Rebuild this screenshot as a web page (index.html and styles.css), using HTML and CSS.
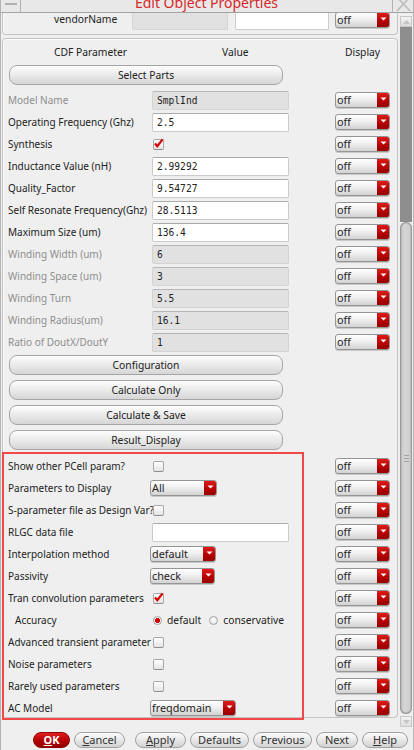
FILE: index.html
```html
<!DOCTYPE html>
<html>
<head>
<meta charset="utf-8">
<link rel="stylesheet" href="styles.css">
</head>
<body>
<div class="window">
  <div class="titlebar">
    <div class="tb-min"><span class="min-line"></span></div>
    <div class="tb-title">Edit Object Properties</div>
    <div class="tb-close"><svg width="21" height="13" viewBox="0 0 21 13"><path d="M4 -3 L17 11 M17 -3 L4 11" stroke="#bdbdbd" stroke-width="1.6" fill="none"/></svg></div>
  </div>
  <div class="body">
    <div class="scrollarea">
      <div class="vendor">
        <div class="vendor-row">
          <span class="vendor-label">vendorName</span>
          <span class="field dis vfield1"></span>
          <span class="field vfield2"></span>
          <div class="dd"><span class="dd-text">off</span><span class="dd-btn"><svg width="7" height="4" viewBox="0 0 7 4"><path d="M0.5 0.5 H6.5 L3.5 3.5 Z" fill="#fff"/></svg></span></div>
        </div>
      </div>
      <div class="main">
        <div class="grid header">
          <span class="h1">CDF Parameter</span>
          <span class="h2">Value</span>
          <span class="h3">Display</span>
        </div>
        <div class="wbtn">Select Parts</div>
        <div class="grid rows">
          <span class="lbl dim">Model Name</span><span class="field dis">SmplInd</span><div class="dd"><span class="dd-text">off</span><span class="dd-btn"><svg width="7" height="4" viewBox="0 0 7 4"><path d="M0.5 0.5 H6.5 L3.5 3.5 Z" fill="#fff"/></svg></span></div>
          <span class="lbl">Operating Frequency (Ghz)</span><span class="field">2.5</span><div class="dd"><span class="dd-text">off</span><span class="dd-btn"><svg width="7" height="4" viewBox="0 0 7 4"><path d="M0.5 0.5 H6.5 L3.5 3.5 Z" fill="#fff"/></svg></span></div>
          <span class="lbl">Synthesis</span><span class="cell"><span class="cb on"><svg width="11" height="11" viewBox="0 0 11 11"><path d="M2 5.5 L4.3 8.2 L9.6 1.4" stroke="#d40000" stroke-width="2.2" fill="none"/></svg></span></span><div class="dd"><span class="dd-text">off</span><span class="dd-btn"><svg width="7" height="4" viewBox="0 0 7 4"><path d="M0.5 0.5 H6.5 L3.5 3.5 Z" fill="#fff"/></svg></span></div>
          <span class="lbl">Inductance Value (nH)</span><span class="field">2.99292</span><div class="dd"><span class="dd-text">off</span><span class="dd-btn"><svg width="7" height="4" viewBox="0 0 7 4"><path d="M0.5 0.5 H6.5 L3.5 3.5 Z" fill="#fff"/></svg></span></div>
          <span class="lbl">Quality_Factor</span><span class="field">9.54727</span><div class="dd"><span class="dd-text">off</span><span class="dd-btn"><svg width="7" height="4" viewBox="0 0 7 4"><path d="M0.5 0.5 H6.5 L3.5 3.5 Z" fill="#fff"/></svg></span></div>
          <span class="lbl">Self Resonate Frequency(Ghz)</span><span class="field">28.5113</span><div class="dd"><span class="dd-text">off</span><span class="dd-btn"><svg width="7" height="4" viewBox="0 0 7 4"><path d="M0.5 0.5 H6.5 L3.5 3.5 Z" fill="#fff"/></svg></span></div>
          <span class="lbl">Maximum Size (um)</span><span class="field">136.4</span><div class="dd"><span class="dd-text">off</span><span class="dd-btn"><svg width="7" height="4" viewBox="0 0 7 4"><path d="M0.5 0.5 H6.5 L3.5 3.5 Z" fill="#fff"/></svg></span></div>
          <span class="lbl dim">Winding Width (um)</span><span class="field dis">6</span><div class="dd"><span class="dd-text">off</span><span class="dd-btn"><svg width="7" height="4" viewBox="0 0 7 4"><path d="M0.5 0.5 H6.5 L3.5 3.5 Z" fill="#fff"/></svg></span></div>
          <span class="lbl dim">Winding Space (um)</span><span class="field dis">3</span><div class="dd"><span class="dd-text">off</span><span class="dd-btn"><svg width="7" height="4" viewBox="0 0 7 4"><path d="M0.5 0.5 H6.5 L3.5 3.5 Z" fill="#fff"/></svg></span></div>
          <span class="lbl dim">Winding Turn</span><span class="field dis">5.5</span><div class="dd"><span class="dd-text">off</span><span class="dd-btn"><svg width="7" height="4" viewBox="0 0 7 4"><path d="M0.5 0.5 H6.5 L3.5 3.5 Z" fill="#fff"/></svg></span></div>
          <span class="lbl dim">Winding Radius(um)</span><span class="field dis">16.1</span><div class="dd"><span class="dd-text">off</span><span class="dd-btn"><svg width="7" height="4" viewBox="0 0 7 4"><path d="M0.5 0.5 H6.5 L3.5 3.5 Z" fill="#fff"/></svg></span></div>
          <span class="lbl dim">Ratio of DoutX/DoutY</span><span class="field dis">1</span><div class="dd"><span class="dd-text">off</span><span class="dd-btn"><svg width="7" height="4" viewBox="0 0 7 4"><path d="M0.5 0.5 H6.5 L3.5 3.5 Z" fill="#fff"/></svg></span></div>
        </div>
        <div class="btn-stack">
          <div class="wbtn">Configuration</div>
          <div class="wbtn">Calculate Only</div>
          <div class="wbtn">Calculate &amp; Save</div>
          <div class="wbtn">Result_Display</div>
        </div>
        <div class="grid rows lower">
          <span class="lbl">Show other PCell param?</span><span class="cell"><span class="cb"></span></span><div class="dd"><span class="dd-text">off</span><span class="dd-btn"><svg width="7" height="4" viewBox="0 0 7 4"><path d="M0.5 0.5 H6.5 L3.5 3.5 Z" fill="#fff"/></svg></span></div>
          <span class="lbl">Parameters to Display</span><span class="cell"><div class="dd val w67"><span class="dd-text">All</span><span class="dd-btn"><svg width="7" height="4" viewBox="0 0 7 4"><path d="M0.5 0.5 H6.5 L3.5 3.5 Z" fill="#fff"/></svg></span></div></span><div class="dd"><span class="dd-text">off</span><span class="dd-btn"><svg width="7" height="4" viewBox="0 0 7 4"><path d="M0.5 0.5 H6.5 L3.5 3.5 Z" fill="#fff"/></svg></span></div>
          <span class="lbl">S-parameter file as Design Var?</span><span class="cell"><span class="cb"></span></span><div class="dd"><span class="dd-text">off</span><span class="dd-btn"><svg width="7" height="4" viewBox="0 0 7 4"><path d="M0.5 0.5 H6.5 L3.5 3.5 Z" fill="#fff"/></svg></span></div>
          <span class="lbl">RLGC data file</span><span class="field"></span><div class="dd"><span class="dd-text">off</span><span class="dd-btn"><svg width="7" height="4" viewBox="0 0 7 4"><path d="M0.5 0.5 H6.5 L3.5 3.5 Z" fill="#fff"/></svg></span></div>
          <span class="lbl">Interpolation method</span><span class="cell"><div class="dd val w66"><span class="dd-text">default</span><span class="dd-btn"><svg width="7" height="4" viewBox="0 0 7 4"><path d="M0.5 0.5 H6.5 L3.5 3.5 Z" fill="#fff"/></svg></span></div></span><div class="dd"><span class="dd-text">off</span><span class="dd-btn"><svg width="7" height="4" viewBox="0 0 7 4"><path d="M0.5 0.5 H6.5 L3.5 3.5 Z" fill="#fff"/></svg></span></div>
          <span class="lbl">Passivity</span><span class="cell"><div class="dd val w65"><span class="dd-text">check</span><span class="dd-btn"><svg width="7" height="4" viewBox="0 0 7 4"><path d="M0.5 0.5 H6.5 L3.5 3.5 Z" fill="#fff"/></svg></span></div></span><div class="dd"><span class="dd-text">off</span><span class="dd-btn"><svg width="7" height="4" viewBox="0 0 7 4"><path d="M0.5 0.5 H6.5 L3.5 3.5 Z" fill="#fff"/></svg></span></div>
          <span class="lbl">Tran convolution parameters</span><span class="cell"><span class="cb on"><svg width="11" height="11" viewBox="0 0 11 11"><path d="M2 5.5 L4.3 8.2 L9.6 1.4" stroke="#d40000" stroke-width="2.2" fill="none"/></svg></span></span><div class="dd"><span class="dd-text">off</span><span class="dd-btn"><svg width="7" height="4" viewBox="0 0 7 4"><path d="M0.5 0.5 H6.5 L3.5 3.5 Z" fill="#fff"/></svg></span></div>
          <span class="lbl indent">Accuracy</span><span class="cell radios"><span class="radio on"></span><span class="rtext">default</span><span class="radio r2"></span><span class="rtext">conservative</span></span><div class="dd"><span class="dd-text">off</span><span class="dd-btn"><svg width="7" height="4" viewBox="0 0 7 4"><path d="M0.5 0.5 H6.5 L3.5 3.5 Z" fill="#fff"/></svg></span></div>
          <span class="lbl">Advanced transient parameter</span><span class="cell"><span class="cb"></span></span><div class="dd"><span class="dd-text">off</span><span class="dd-btn"><svg width="7" height="4" viewBox="0 0 7 4"><path d="M0.5 0.5 H6.5 L3.5 3.5 Z" fill="#fff"/></svg></span></div>
          <span class="lbl">Noise parameters</span><span class="cell"><span class="cb"></span></span><div class="dd"><span class="dd-text">off</span><span class="dd-btn"><svg width="7" height="4" viewBox="0 0 7 4"><path d="M0.5 0.5 H6.5 L3.5 3.5 Z" fill="#fff"/></svg></span></div>
          <span class="lbl">Rarely used parameters</span><span class="cell"><span class="cb"></span></span><div class="dd"><span class="dd-text">off</span><span class="dd-btn"><svg width="7" height="4" viewBox="0 0 7 4"><path d="M0.5 0.5 H6.5 L3.5 3.5 Z" fill="#fff"/></svg></span></div>
          <span class="lbl">AC Model</span><span class="cell"><div class="dd val w86"><span class="dd-text">freqdomain</span><span class="dd-btn"><svg width="7" height="4" viewBox="0 0 7 4"><path d="M0.5 0.5 H6.5 L3.5 3.5 Z" fill="#fff"/></svg></span></div></span><div class="dd"><span class="dd-text">off</span><span class="dd-btn"><svg width="7" height="4" viewBox="0 0 7 4"><path d="M0.5 0.5 H6.5 L3.5 3.5 Z" fill="#fff"/></svg></span></div>
        </div>
      </div>
    </div>
    <div class="scrollbar">
      <div class="sb-arrow"><svg width="9" height="6" viewBox="0 0 9 6"><path d="M1 5 L4.5 1 L8 5 Z" fill="#c4c4c4"/></svg></div>
      <div class="sb-track"></div>
      <div class="sb-thumb"><span class="grip"></span><span class="grip"></span><span class="grip"></span></div>
      <div class="sb-arrow down"><svg width="9" height="6" viewBox="0 0 9 6"><path d="M1 1 L4.5 5 L8 1 Z" fill="#c4c4c4"/></svg></div>
    </div>
  </div>
  <div class="footer">
    <div class="fbtn ok w37"><u>O</u>K</div>
    <div class="fbtn w51"><u>C</u>ancel</div>
    <div class="fbtn w51 apply"><u>A</u>pply</div>
    <div class="fbtn w59">Defaults</div>
    <div class="fbtn w59">Previous</div>
    <div class="fbtn w42">Next</div>
    <div class="fbtn w46"><u>H</u>elp</div>
  </div>
  <div class="highlight"></div>
</div>
</body>
</html>
```
FILE: styles.css
```css
* { box-sizing: border-box; }
html, body { margin: 0; padding: 0; }
body {
  width: 414px;
  height: 750px;
  overflow: hidden;
  background: #efefef;
  font-family: "Noto Sans", "Open Sans", sans-serif;
  font-size: 10px;
  color: #222;
}
.window {
  position: relative;
  width: 414px;
  height: 750px;
  border-left: 1px solid #b4b4b4;
  border-right: 1px solid #b4b4b4;
  background: #efefef;
}

/* title bar */
.titlebar {
  display: flex;
  height: 13px;
  background: #e8e8e8;
  border-bottom: 1px solid #a4a4a4;
  overflow: hidden;
}
.tb-min {
  width: 20px;
  border-right: 1px solid #b2b2b2;
  display: flex;
  justify-content: center;
}
.min-line {
  display: block;
  width: 12px;
  height: 2px;
  margin-top: 3px;
  background: #b0b0b0;
}
.tb-title {
  flex: 1;
  text-align: center;
  color: #d42a2a;
  font-size: 14px;
  line-height: 14px;
  margin-top: -4px;
  white-space: nowrap;
}
.tb-close {
  width: 21px;
  border-left: 1px solid #b2b2b2;
}
.tb-close svg { display: block; }

/* body */
.body {
  display: flex;
  height: 714px;
}
.scrollarea {
  width: 397px;
  padding-left: 1px;
}
.vendor {
  height: 22px;
  border: 1px solid #c4c4c4;
  border-top: none;
  border-radius: 0 0 4px 4px;
  overflow: hidden;
  box-shadow: inset 1px 0 0 #fafafa;
}
.vendor-row {
  display: flex;
  align-items: center;
  height: 20px;
  margin-top: -3px;
  padding-left: 51px;
}
.vendor-label {
  width: 78px;
  flex: none;
  margin-top: -3px;
  font-size: 10.3px;
}
.field.vfield1 { width: 96px; margin-right: 7px; flex: none; }
.field.vfield2 { width: 94px; margin-right: 6px; flex: none; }

.main {
  margin-top: 3px;
  height: 680px;
  border: 1px solid #c4c4c4;
  border-radius: 4px;
  padding: 0 5px;
  overflow: hidden;
  box-shadow: inset 1px 1px 0 #fafafa;
}
.grid {
  display: grid;
  grid-template-columns: 144px 183px 55px;
  align-items: center;
}
.header {
  height: 26px;
  font-size: 10.3px;
}
.h1 { padding-left: 46px; }
.h2 { padding-left: 70px; }
.h3 { padding-left: 10px; }

.wbtn {
  width: 274px;
  height: 20px;
  margin-left: 1px;
  border: 1px solid #a6a6a6;
  border-radius: 8px;
  background: linear-gradient(#fefefe, #ececec 45%, #d6d6d6);
  text-align: center;
  line-height: 18px;
  font-size: 10.3px;
  color: #222;
}
.rows {
  grid-auto-rows: 22px;
  margin-top: 4px;
}
.lower { margin-top: 5px; }
.btn-stack {
  display: flex;
  flex-direction: column;
  gap: 5px;
  margin-top: 2px;
}
.lbl {
  white-space: nowrap;
}
.lbl.dim { color: #8e8e8e; }
.lbl.indent { padding-left: 7px; }
.cell {
  display: flex;
  align-items: center;
}

/* text fields */
.field {
  display: block;
  width: 137px;
  height: 19px;
  border: 1px solid #cbcbcb;
  border-top-color: #ababab;
  border-radius: 2px;
  background: #fff;
  font-family: "DejaVu Sans Mono", "Liberation Mono", monospace;
  font-size: 9.6px;
  line-height: 17px;
  padding-left: 4px;
  color: #222;
  white-space: pre;
}
.field.dis {
  background: #e1e1e1;
  border-color: #d3d3d3;
  border-top-color: #b5b5b5;
}

/* dropdown */
.dd {
  display: flex;
  flex: none;
  width: 55px;
  height: 16px;
  border: 1px solid #959595;
  border-radius: 3px;
  background: linear-gradient(#ffffff, #f0f0f0 45%, #d2d2d2);
  overflow: hidden;
  box-shadow: 0 1px 0 #c8c8c8;
}
.dd-text {
  flex: 1;
  padding-left: 1px;
  font-size: 10.8px;
  line-height: 13px;
  color: #222;
  white-space: nowrap;
}
.dd-btn {
  width: 12px;
  display: flex;
  align-items: center;
  justify-content: center;
  background: linear-gradient(#e01a1a, #b40000 60%, #960000);
}
.dd-btn svg { display: block; margin-top: -2px; }
.dd.val { margin-left: -2px; }
.w67 { width: 67px; }
.w66 { width: 66px; }
.w65 { width: 65px; }
.w86 { width: 86px; }

/* checkbox / radio */
.cb {
  display: block;
  width: 11px;
  height: 11px;
  margin-left: 1px;
  border: 1px solid #a8a8a8;
  border-bottom-color: #8e8e8e;
  border-radius: 2px;
  background: linear-gradient(#ffffff, #e4e4e4);
  position: relative;
}
.cb svg {
  position: absolute;
  left: -1px;
  top: -2px;
}
.radios { white-space: nowrap; }
.radio {
  display: block;
  width: 9px;
  height: 9px;
  margin-left: 1px;
  border: 1px solid #a2a2a2;
  border-radius: 50%;
  background: radial-gradient(circle at 50% 40%, #ffffff, #dedede);
  flex: none;
}
.radio.on {
  background: radial-gradient(circle, #d40000 0 2.2px, #fafafa 2.7px, #e2e2e2);
}
.rtext { margin-left: 5px; font-size: 10.3px; }
.radio.r2 { margin-left: 8px; }

/* scrollbar */
.scrollbar {
  width: 13px;
  margin-left: 2px;
  display: flex;
  flex-direction: column;
  padding-top: 3px;
}
.sb-arrow {
  height: 11px;
  width: 12px;
  background: linear-gradient(#f4f4f4, #dcdcdc);
  border: 1px solid #c8c8c8;
  display: flex;
  align-items: center;
  justify-content: center;
}
.sb-track {
  width: 12px;
  height: 195px;
  background: #8e8e8e;
}
.sb-thumb {
  width: 12px;
  height: 492px;
  border-radius: 6px;
  box-shadow: inset 0 0 0 1px #9a9a9a, inset 0 0 0 2px #bdbdbd;
  background: linear-gradient(90deg, #c2c2c2, #d6d6d6 40%, #cbcbcb);
  display: flex;
  flex-direction: column;
  align-items: center;
  justify-content: center;
  gap: 2px;
  padding-bottom: 20px;
}
.grip {
  display: block;
  width: 5px;
  height: 1px;
  background: #a4a4a4;
}
.sb-arrow.down { margin-top: 2px; }

/* footer */
.footer {
  display: flex;
  gap: 4px;
  padding: 5px 0 0 32px;
  height: 23px;
}
.fbtn {
  height: 16px;
  border: 1px solid #a0a0a0;
  border-radius: 8px;
  background: linear-gradient(#fdfdfd, #eaeaea 45%, #d2d2d2);
  text-align: center;
  font-size: 11px;
  line-height: 14px;
  color: #333;
}
.fbtn u { text-decoration-thickness: 1px; text-underline-offset: 1px; }
.fbtn.ok {
  background: linear-gradient(#e02020, #b50000 55%, #930000);
  border-color: #8a0000;
  color: #fff;
  font-weight: bold;
}
.w37 { width: 37px; }
.w51 { width: 51px; }
.w59 { width: 59px; }
.w42 { width: 42px; }
.w46 { width: 46px; }
.apply { margin-left: 6px; }

/* red annotation rectangle */
.highlight {
  position: absolute;
  left: 1px;
  top: 452px;
  width: 302px;
  height: 268px;
  border: 2px solid #f24848;
  pointer-events: none;
}
```
